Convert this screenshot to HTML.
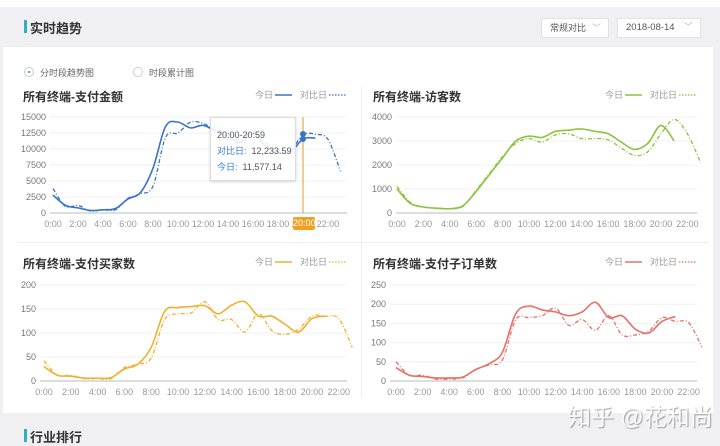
<!DOCTYPE html>
<html><head><meta charset="utf-8">
<style>
*{margin:0;padding:0;box-sizing:border-box}
body{width:720px;height:445px;overflow:hidden;background:#f0f0f2;font-family:"Liberation Sans","Noto Sans CJK SC",sans-serif;position:relative}
.a{position:absolute;white-space:nowrap}
.h{font-size:13px;font-weight:bold;color:#333}
.bar{position:absolute;width:3px;height:13px;background:#2bb3c0}
.sel{position:absolute;background:#fff;border:1px solid #e2e2e2;height:20px;font-size:9px;color:#555;line-height:18px;padding-left:8px}
.t{font-size:12px;font-weight:bold;color:#333}
.lg{font-size:9px;color:#999}
</style></head><body>
<div class="a" style="left:0;top:0;width:720px;height:7px;background:#fff"></div>
<div class="bar" style="left:24px;top:20px"></div>
<div class="a h" style="left:30px;top:18px">实时趋势</div>
<div class="sel" style="left:541px;top:18px;width:68px">常规对比<span style="position:absolute;right:7px;color:#bbb">﹀</span></div>
<div class="sel" style="left:617px;top:18px;width:84px;font-size:9.5px">2018-08-14<span style="position:absolute;right:7px;color:#bbb">﹀</span></div>
<div class="a" style="left:3px;top:47px;width:710px;height:366px;background:#fff"></div>
<div class="a" style="left:24px;top:67px;width:10px;height:10px;border:1px solid #ccc;border-radius:50%"></div>
<div class="a" style="left:28px;top:71px;width:2px;height:2px;background:#3a7bd5;border-radius:50%"></div>
<div class="a lg" style="left:40px;top:66px;color:#666">分时段趋势图</div>
<div class="a" style="left:133px;top:67px;width:10px;height:10px;border:1px solid #ccc;border-radius:50%"></div>
<div class="a lg" style="left:149px;top:66px;color:#666">时段累计图</div>
<div class="a" style="left:361px;top:86px;width:1px;height:310px;background:#eee"></div>
<div class="a" style="left:18px;top:242px;width:690px;height:1px;background:#eee"></div>

<div class="a t" style="left:23px;top:88px">所有终端-支付金额</div>
<div class="a t" style="left:373px;top:88px">所有终端-访客数</div>
<div class="a t" style="left:23px;top:255px">所有终端-支付买家数</div>
<div class="a t" style="left:373px;top:255px">所有终端-支付子订单数</div>

<svg class="a" style="left:0;top:0" width="720" height="445" id="s"></svg>

<div class="a" style="left:210px;top:117px;width:86px;height:64px;background:rgba(255,255,255,.88);border:1px solid #ddd;box-shadow:0 1px 3px rgba(0,0,0,.15);font-size:9px;color:#555;padding:9px 0 0 6px;line-height:16px">
20:00-20:59<br><span style="color:#3a7bd5">对比日:</span>&nbsp; 12,233.59<br><span style="color:#3a7bd5">今日:</span>&nbsp; 11,577.14</div>
<div class="a" style="left:293px;top:217px;width:22px;height:13px;background:#f0a020;border-radius:2px;color:#fff;font-size:9px;line-height:13px;text-align:center">20:00</div>

<div class="a" style="left:568px;top:398px;font-size:23px;color:rgba(255,255,255,.9);text-shadow:1px 1px 1px rgba(0,0,0,.35)">知乎 @花和尚</div>
<div class="bar" style="left:24px;top:429px"></div>
<div class="a h" style="left:30px;top:427px">行业排行</div>

<script>
var s=document.getElementById('s'),NS='http://www.w3.org/2000/svg';
function el(n,a,t){var e=document.createElementNS(NS,n);for(var k in a)e.setAttribute(k,a[k]);if(t!=null)e.textContent=t;s.appendChild(e);return e}
function path(p){var d='M'+p[0][0]+','+p[0][1];for(var i=0;i<p.length-1;i++){var p0=p[i-1]||p[i],p1=p[i],p2=p[i+1],p3=p[i+2]||p2;
d+=' C'+(p1[0]+(p2[0]-p0[0])/6)+','+(p1[1]+(p2[1]-p0[1])/6)+' '+(p2[0]-(p3[0]-p1[0])/6)+','+(p2[1]-(p3[1]-p1[1])/6)+' '+p2[0]+','+p2[1]}return d}
function chart(o){
 var y0=o.y0,y1=o.y1,n=o.ticks.length-1;
 for(var i=0;i<=n;i++){var y=y1-(y1-y0)*i/n;
  el('line',{x1:o.px,x2:o.pr,y1:y,y2:y,stroke:i?'#f0f0f0':'#bbb','stroke-width':1});
  el('text',{x:o.px-4,y:y+3,'text-anchor':'end','font-size':9,fill:'#777','font-family':'Liberation Sans'},o.ticks[i]);}
 for(var h=0;h<=22;h+=2){el('text',{x:o.x0+h*o.dx,y:y1+14,'text-anchor':'middle','font-size':9,fill:'#999','font-family':'Liberation Sans'},h+':00');}
 function pts(a){return a.map(function(v,i){return [o.x0+i*o.dx,y1-v/o.max*(y1-y0)]})}
 el('path',{d:path(pts(o.cmp)),fill:'none',stroke:o.c,'stroke-width':1.3,'stroke-dasharray':'4,2,1,2'});
 el('path',{d:path(pts(o.tod)),fill:'none',stroke:o.c,'stroke-width':1.6});
 el('text',{x:o.lx,y:o.ly,'font-size':9,fill:'#999'},'今日');
 el('line',{x1:o.lx+20,x2:o.lx+37,y1:o.ly-3,y2:o.ly-3,stroke:o.c,'stroke-width':1.6});
 el('text',{x:o.lx+45,y:o.ly,'font-size':9,fill:'#999'},'对比日');
 el('line',{x1:o.lx+74,x2:o.lx+91,y1:o.ly-3,y2:o.ly-3,stroke:o.c,'stroke-width':1.2,'stroke-dasharray':'1.5,1.5'});
}
chart({px:50,pr:347,y0:117,y1:213,x0:53,dx:12.5,max:15000,ticks:['0','2500','5000','7500','10000','12500','15000'],c:'#3a74c9',lx:255,ly:98,
 tod:[2800,1200,800,400,500,700,2200,3200,7000,13500,14200,13300,13700,12800,12000,11000,12500,10500,9500,9500,11577,11700],
 cmp:[3800,1000,1200,300,500,500,2300,3000,4200,11800,12500,14200,14000,13000,12500,11500,12800,11000,10000,9800,12233,12300,11500,6500]});
chart({px:396,pr:697,y0:117,y1:213,x0:397,dx:13.2,max:4000,ticks:['0','1000','2000','3000','4000'],c:'#8cc43c',lx:605,ly:98,
 tod:[1000,400,250,200,180,300,900,1600,2300,3000,3200,3150,3400,3450,3500,3400,3300,2950,2650,2900,3650,3000],
 cmp:[1100,450,250,200,180,280,950,1650,2350,2900,3100,2950,3250,3300,3100,3100,3050,2700,2400,2550,3300,3900,3300,2100]});
chart({px:40,pr:347,y0:285,y1:381,x0:44,dx:13.4,max:200,ticks:['0','50','100','150','200'],c:'#f0b030',lx:255,ly:265,
 tod:[30,12,10,6,6,7,25,35,70,145,153,155,157,140,158,165,135,135,118,102,130,135],
 cmp:[42,12,12,5,5,5,28,35,48,128,140,142,165,128,128,102,140,105,97,108,135,135,130,70]});
chart({px:390,pr:697,y0:285,y1:381,x0:396,dx:13.3,max:250,ticks:['0','50','100','150','200','250'],c:'#e8706a',lx:605,ly:265,
 tod:[35,15,12,8,8,10,30,45,75,175,195,185,180,170,180,205,165,170,135,125,155,168],
 cmp:[50,15,15,5,5,8,30,42,55,160,165,170,190,145,160,132,170,120,120,130,165,155,152,88]});
el('line',{x1:303,x2:303,y1:117,y2:213,stroke:'#e09a30','stroke-width':1});
el('circle',{cx:303,cy:134,r:3,fill:'#3a74c9'});
el('circle',{cx:303,cy:139,r:3,fill:'#3a74c9'});
</script>
</body></html>
